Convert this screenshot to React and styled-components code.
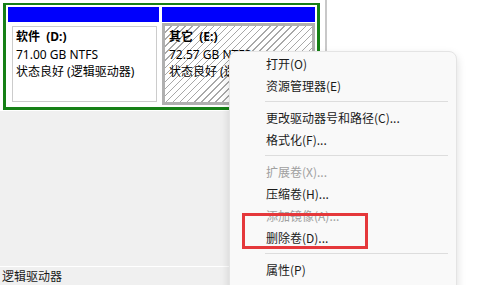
import React from 'react';
import styled, {createGlobalStyle} from "styled-components";

const GlobalStyle = createGlobalStyle`
    html, body {
        margin: 0;
        padding: 0;
    }
    body {
        width: 495px;
        height: 285px;
        overflow: hidden;
        background: #ffffff;
        font-family: "Noto Sans CJK SC", "Liberation Sans", sans-serif;
    }
`;

const menuItems = [
    {text: "打开(O)"},
    {text: "资源管理器(E)"},
    {separator: true},
    {text: "更改驱动器号和路径(C)..."},
    {text: "格式化(F)..."},
    {separator: true},
    {text: "扩展卷(X)...", disabled: true},
    {text: "压缩卷(H)..."},
    {text: "添加镜像(A)...", disabled: true},
    {text: "删除卷(D)...", marked: true},
    {separator: true},
    {text: "属性(P)"},
    {separator: true},
];

const partitions = [
    {name: "软件", letter: "(D:)", size: "71.00 GB NTFS", status: "状态良好 (逻辑驱动器)"},
    {name: "其它", letter: "(E:)", size: "72.57 GB NTFS", status: "状态良好 (逻辑驱动器)", selected: true},
];

export default function App() {
    return (
        <Screen>
            <GlobalStyle />
            <LeftPane>
                <DiskRow>
                    <Extended>
                        {
                            partitions.map(({name, letter, size, status, selected}) => {
                                return (
                                    <Partition key={letter} selected={selected}>
                                        <PartHeader />
                                        <PartBody selected={selected}>
                                            <PartTitle>{name}{"  "}{letter}</PartTitle>
                                            <PartLine>{size}</PartLine>
                                            <PartLine>{status}</PartLine>
                                        </PartBody>
                                    </Partition>
                                );
                            })
                        }
                    </Extended>
                </DiskRow>
                <EmptyArea />
                <Legend>逻辑驱动器</Legend>
            </LeftPane>
            <RightPane />
            <Menu>
                {
                    menuItems.map((item, index) => {
                        if (item.separator) {
                            return <Separator key={index} />;
                        }
                        return (
                            <MenuItem key={index} disabled={item.disabled}>
                                {item.text}
                                {item.marked && <Highlight />}
                            </MenuItem>
                        );
                    })
                }
            </Menu>
        </Screen>
    );
}

const Screen = styled.div`
    position: relative;
    width: 495px;
    height: 285px;
    display: flex;
    overflow: hidden;
`;

const LeftPane = styled.div`
    width: 325px;
    display: flex;
    flex-direction: column;
    background: #f0f0f0;
    border-right: 2px solid #c8c8c8;
`;

const RightPane = styled.div`
    flex: 1;
    background: #ffffff;
`;

const DiskRow = styled.div`
    height: 111px;
    box-sizing: border-box;
    padding: 3px 0 0 3px;
    background: #ffffff;
    display: flex;
`;

const Extended = styled.div`
    width: 317px;
    height: 107px;
    box-sizing: border-box;
    border: 3px solid #168016;
    border-top-width: 2px;
    padding: 2px 2px 2px 2px;
    display: flex;
    gap: 3px;
    background: #ffffff;
`;

const Partition = styled.div`
    display: flex;
    flex-direction: column;
    ${p => p.selected ? "flex: 1;" : "width: 151px;"}
`;

const PartHeader = styled.div`
    height: 15px;
    background: #0000fc;
`;

const PartBody = styled.div`
    flex: 1;
    box-sizing: border-box;
    ${p => p.selected ? `
        margin: 1px 0 0 0;
        border: 3px solid #b0b0b0;
        padding: 2px 4px;
        background: repeating-linear-gradient(135deg, #ffffff 0px, #ffffff 4px, #a8a8a8 4px, #a8a8a8 5px);
    ` : `
        margin: 4px 2px 3px 4px;
        border: 1px solid #cccccc;
        padding: 1px 3px;
        background: #ffffff;
    `}
    font-family: "Noto Sans", "Noto Sans CJK SC", sans-serif;
    font-size: 12px;
    line-height: 17.5px;
    color: #000000;
    white-space: pre;
    overflow: hidden;
`;

const PartTitle = styled.div`
    font-weight: bold;
`;

const PartLine = styled.div``;

const EmptyArea = styled.div`
    flex: 1;
    background: #f0f0f0;
`;

const Legend = styled.div`
    height: 18px;
    border-top: 1px solid #ffffff;
    padding-left: 2px;
    font-size: 12px;
    line-height: 18px;
    color: #1a1a1a;
    background: #f0f0f0;
`;

const Menu = styled.div`
    position: absolute;
    left: 229px;
    top: 51px;
    width: 228px;
    height: 260px;
    box-sizing: border-box;
    padding-top: 0px;
    background: #f9f9f9;
    border: 1px solid #e4e4e4;
    border-radius: 8px;
    box-shadow: 0 4px 10px rgba(0, 0, 0, 0.14);
`;

const MenuItem = styled.div`
    position: relative;
    height: 22px;
    display: flex;
    align-items: center;
    padding-left: 36px;
    font-size: 12px;
    color: ${p => p.disabled ? "#a0a0a0" : "#1b1b1b"};
`;

const Separator = styled.div`
    height: 10px;
    display: flex;
    align-items: center;
    margin: 0 8px 0 35px;

    &::after {
        content: "";
        flex: 1;
        height: 1px;
        background: #dddddd;
    }
`;

const Highlight = styled.div`
    position: absolute;
    left: 12px;
    top: -13px;
    width: 126px;
    height: 36px;
    box-sizing: border-box;
    border: 3px solid #e5383b;
`;
